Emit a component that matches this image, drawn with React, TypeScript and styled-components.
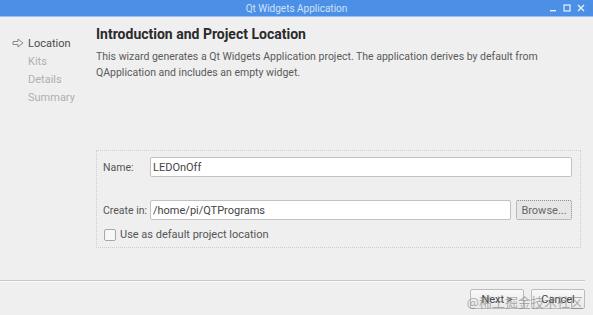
import React from 'react';
import styled, { createGlobalStyle } from 'styled-components';

const GlobalStyle = createGlobalStyle`
  html, body {
    margin: 0;
    padding: 0;
    background: #efefef;
  }
  body {
    font-family: Roboto, "Noto Sans", "Liberation Sans", sans-serif;
  }
`;

const steps = ['Location', 'Kits', 'Details', 'Summary'];

const WindowButton = ({ kind }: { kind: 'min' | 'max' | 'close' }) => (
  <svg width="8" height="8" viewBox="0 0 8 8">
    {kind === 'min' && <rect x="1" y="6" width="6" height="1.4" fill="#e8f0fb" />}
    {kind === 'max' && <rect x="1" y="1" width="6" height="6" fill="none" stroke="#e8f0fb" strokeWidth="1.2" />}
    {kind === 'close' && (
      <path d="M1 1 L7 7 M7 1 L1 7" stroke="#e8f0fb" strokeWidth="1.4" />
    )}
  </svg>
);

const StepArrow = () => (
  <svg width="12" height="10" viewBox="0 0 12 10">
    <path
      d="M1 3.5 H6 V1 L11 5 L6 9 V6.5 H1 Z"
      fill="none"
      stroke="#8a8a8a"
      strokeWidth="1"
      strokeLinejoin="round"
    />
  </svg>
);

export default function App() {
  return (
    <Window>
      <GlobalStyle />
      <TitleBar>
        <Title>Qt Widgets Application</Title>
        <Controls>
          <WindowButton kind="min" />
          <WindowButton kind="max" />
          <WindowButton kind="close" />
        </Controls>
      </TitleBar>

      <Main>
        <Sidebar>
          {steps.map((step, index) => (
            <Step key={step} active={index === 0}>
              <ArrowSlot>{index === 0 && <StepArrow />}</ArrowSlot>
              {step}
            </Step>
          ))}
        </Sidebar>

        <Content>
          <Heading>Introduction and Project Location</Heading>
          <Description>
            This wizard generates a Qt Widgets Application project. The application derives by default from
            <br />
            QApplication and includes an empty widget.
          </Description>

          <GroupBox>
            <FieldRow>
              <Label>Name:</Label>
              <TextField value="LEDOnOff" readOnly />
            </FieldRow>
            <FieldRow spaced>
              <Label>Create in:</Label>
              <TextField value="/home/pi/QTPrograms" readOnly />
              <BrowseButton>Browse...</BrowseButton>
            </FieldRow>
            <CheckRow>
              <CheckBox />
              Use as default project location
            </CheckRow>
          </GroupBox>
        </Content>
      </Main>

      <Separator />

      <Footer>
        <PushButton>Next &gt;</PushButton>
        <PushButton>Cancel</PushButton>
        <Watermark>@稀土掘金技术社区</Watermark>
      </Footer>
    </Window>
  );
}

const Window = styled.div`
  width: 593px;
  height: 315px;
  display: flex;
  flex-direction: column;
  background: #efefef;
  overflow: hidden;
`;

const TitleBar = styled.div`
  height: 16px;
  flex-shrink: 0;
  background: #4b90e6;
  border-bottom: 1px solid #9cc0ef;
  display: flex;
  align-items: center;
  justify-content: center;
  position: relative;
`;

const Title = styled.div`
  font-size: 10px;
  color: #cfe0f7;
`;

const Controls = styled.div`
  position: absolute;
  right: 8px;
  top: 4px;
  display: flex;
  gap: 6px;
`;

const Main = styled.div`
  flex: 1;
  display: flex;
  min-height: 0;
`;

const Sidebar = styled.div`
  width: 96px;
  flex-shrink: 0;
  padding: 17px 0 0 12px;
  box-sizing: border-box;
`;

const Step = styled.div<{ active?: boolean }>`
  height: 18px;
  display: flex;
  align-items: center;
  font-size: 11px;
  color: ${(p) => (p.active ? '#4a4a4a' : '#b0b0b0')};
`;

const ArrowSlot = styled.span`
  width: 16px;
  display: inline-flex;
  align-items: center;
`;

const Content = styled.div`
  flex: 1;
  display: flex;
  flex-direction: column;
  padding: 9px 12px 32px 0;
  min-width: 0;
`;

const Heading = styled.div`
  font-size: 14px;
  font-weight: 700;
  line-height: 16px;
  color: #2a2a2a;
`;

const Description = styled.div`
  margin-top: 7px;
  font-size: 10.5px;
  line-height: 16px;
  color: #5a5a5a;
  white-space: nowrap;
`;

const GroupBox = styled.div`
  margin-top: auto;
  height: 98px;
  box-sizing: border-box;
  border: 1px dotted #cdcdcd;
  padding: 6px 8px 0 6px;
  display: flex;
  flex-direction: column;
`;

const FieldRow = styled.div<{ spaced?: boolean }>`
  display: flex;
  align-items: center;
  height: 20px;
  margin-top: ${(p) => (p.spaced ? '23px' : '0')};
  gap: 5px;
`;

const Label = styled.span`
  width: 42px;
  flex-shrink: 0;
  font-size: 10.5px;
  color: #555;
  white-space: nowrap;
`;

const TextField = styled.input`
  flex: 1;
  min-width: 0;
  height: 20px;
  box-sizing: border-box;
  border: 1px solid #c2c2c2;
  border-radius: 2px;
  background: #fff;
  padding: 0 2px;
  font-family: Roboto, "Noto Sans", sans-serif;
  font-size: 11px;
  color: #444;
  outline: none;
`;

const BrowseButton = styled.button`
  width: 56px;
  height: 20px;
  flex-shrink: 0;
  box-sizing: border-box;
  border: 1px dotted #8e8e8e;
  border-radius: 2px;
  background: #e6e6e6;
  font-family: Roboto, "Noto Sans", sans-serif;
  font-size: 11px;
  color: #666;
  padding: 0;
`;

const CheckRow = styled.label`
  margin-top: 8px;
  display: flex;
  align-items: center;
  gap: 4px;
  font-size: 11px;
  color: #555;
`;

const CheckBox = styled.span`
  width: 10px;
  height: 10px;
  margin-left: 1px;
  border: 1px solid #a8a8a8;
  border-radius: 2px;
  background: #f7f7f7;
`;

const Separator = styled.div`
  height: 0;
  margin-right: 8px;
  border-top: 1px solid #c8c8c8;
  border-bottom: 1px solid #fafafa;
`;

const Footer = styled.div`
  height: 33px;
  flex-shrink: 0;
  display: flex;
  justify-content: flex-end;
  align-items: flex-start;
  padding: 7px 8px 0 0;
  box-sizing: border-box;
  gap: 7px;
  position: relative;
`;

const PushButton = styled.button`
  width: 54px;
  height: 20px;
  box-sizing: border-box;
  border: 1px solid #bcbcbc;
  border-radius: 2px;
  background: linear-gradient(#f8f8f8, #e9e9e9);
  font-family: Roboto, "Noto Sans", sans-serif;
  font-size: 11px;
  color: #444;
  padding: 0;
`;

const Watermark = styled.span`
  position: absolute;
  right: 10px;
  top: 10px;
  font-family: "Noto Sans CJK SC", sans-serif;
  font-size: 13px;
  color: rgba(110, 110, 110, 0.55);
  pointer-events: none;
`;
